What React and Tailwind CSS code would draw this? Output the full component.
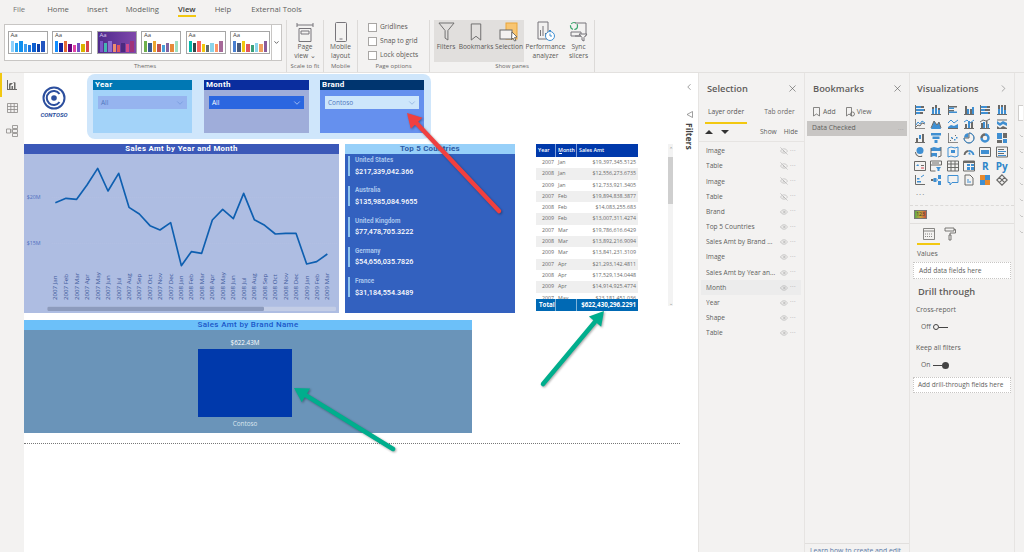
import React from "react";
import { X, ChevronDown, ChevronRight, ChevronLeft, Eye, EyeOff } from "lucide-react";

const tabs = [
  ["Home", "ml-[22px]"], ["Insert", "ml-[18px]"], ["Modeling", "ml-[18px]"], ["View", "ml-[19px]"], ["Help", "ml-[19px]"], ["External Tools", "ml-[20px]"],
];

const themes = [
  { bars: ["#8ed1fc", "#2aa4f4", "#0f8fee", "#3f9ff0", "#1a75e0", "#0d5fd0", "#0c3fa8", "#2255c0"], cls: "bg-white", t: "text-[#444]" },
  { bars: ["#118dff", "#12239e", "#e66c37", "#6b007b", "#e044a7", "#744ec2", "#d9b300", "#d64550"], cls: "bg-white", t: "text-[#444]" },
  { bars: ["#7a55c7", "#45b6b0", "#8e6fd1", "#ee8e6d", "#e0555f", "#4b2a7f", "#d14a8b", "#a0337a"], cls: "bg-gradient-to-r from-[#4f2a8c] to-[#8048ab]", t: "text-[#d9c9ee]" },
  { bars: ["#6fb04b", "#3b5b92", "#eda62f", "#c0504d", "#4aa0d9", "#8064a2", "#e68a3a", "#9fdfc0"], cls: "bg-white", t: "text-[#444]" },
  { bars: ["#01b8aa", "#374649", "#fd625e", "#f2c80f", "#5f6b6d", "#8ad4eb", "#fe9666", "#a66999"], cls: "bg-white", t: "text-[#444]" },
  { bars: ["#4a7fd0", "#4a5a7a", "#f2c80f", "#e0555f", "#3aa07a", "#8ad4eb", "#f2a060", "#8a5a9a"], cls: "bg-white", t: "text-[#444]" },
];
const barHeights = [11, 9, 11, 8, 7, 9, 8, 11];

const layers = [
  ["Image", 0], ["Table", 0], ["Image", 0], ["Table", 0], ["Brand", 1], ["Top 5 Countries", 1], ["Sales Amt by Brand ...", 1], ["Image", 1],
  ["Sales Amt by Year an...", 1], ["Month", 1], ["Year", 1], ["Shape", 1], ["Table", 1],
];

const countries = [
  ["United States", "$217,339,042.366"], ["Australia", "$135,985,084.9655"], ["United Kingdom", "$77,478,705.3222"],
  ["Germany", "$54,656,035.7826"], ["France", "$31,184,554.3489"],
];

const rows = [
  ["2007", "Jan", "$19,397,345.5125"], ["2008", "Jan", "$12,556,273.6735"], ["2009", "Jan", "$12,733,921.3405"],
  ["2007", "Feb", "$19,894,838.3877"], ["2008", "Feb", "$14,083,255.683"], ["2009", "Feb", "$13,007,311.4274"],
  ["2007", "Mar", "$19,786,616.6429"], ["2008", "Mar", "$13,892,216.9094"], ["2009", "Mar", "$13,841,231.3109"],
  ["2007", "Apr", "$21,293,142.4811"], ["2008", "Apr", "$17,529,134.0448"], ["2009", "Apr", "$14,914,925.4774"],
  ["2007", "May", "$23,181,451.036"],
];

const pts = [[106,188],[138,175],[170,178],[201,135],[233,85],[264,153],[296,100],[327,202],[358,222],[390,257],[420,270],[452,248],[484,377],[514,335],[545,340],[577,240],[608,208],[640,236],[671,160],[703,239],[734,256],[766,282],[797,280],[828,280],[860,372],[890,365],[922,342]];
const months = ["Jan","Feb","Mar","Apr","May","Jun","Jul","Aug","Sep","Oct","Nov","Dec"];
const xLabels = pts.map((_, i) => `${2007 + Math.floor(i / 12)} ${months[i % 12]}`);

// each icon: g = grey fill, b = blue fill, gs = grey stroke, bs = blue stroke
const vizIcons = [
  { g: "M1 1h1v10H1z M7 2h3v2H7z M10 5h1v2h-1z M6 8h3v2H6z", b: "M2 2h5v2H2z M2 5h8v2H2z M2 8h4v2H2z" },
  { g: "M1 10h10v1H1z M2 3h2v2H2z M5 1h2v3H5z M8 4h2v2H8z", b: "M2 5h2v5H2z M5 4h2v6H5z M8 6h2v4H8z" },
  { g: "M1 1h1v10H1z M2 2h8v1.5H2z M2 6h5v1.5H2z", b: "M2 3.5h5V5H2z M2 7.5h8V9H2z" },
  { g: "M1 10h10v1H1z M2 2h2v8H2z M7 5h2v5H7z", b: "M4 5h2v5H4z M9 3h2v7H9z" },
  { g: "M1 1h1v10H1z M8 2h3v2H8z M6 5h5v2H6z M9 8h2v2H9z", b: "M2 2h6v2H2z M2 5h4v2H2z M2 8h7v2H2z" },
  { g: "M2 1h2v4H2z M5 1h2v2H5z M8 1h2v5H8z M1 10h10v1H1z", b: "M2 5h2v5H2z M5 3h2v7H5z M8 6h2v4H8z" },
  { g: "M1 1h.8v9.2H11v.8H1z", bs: "M2 7l2-3 2 2 2-3 3 2", gs: "M2 9l2-2 2 1 2-3 3 1" },
  { b: "M1 11L4 3l3 4 2-3 2 7z", gs: "M1 10L4 3l3 4 2-3 2 6" },
  { b: "M1 9l3-2 3 1 4-2v5H1z", bs: "M1 5l3-3 3 3 4-3", gs: "M1 10.5h10" },
  { g: "M2 6h2v4H2z M8 4h2v6H8z M1 10h10v1H1z", b: "M5 3h2v7H5z", bs: "M1 4l3-2 3 3 4-3" },
  { g: "M2 5h2v5H2z M7 3h1.5v7H7z M1 10h10v1H1z", b: "M4 4h2v6H4z M8.500 6H10v4H8.500z", gs: "M1 4l3-2 3 1 4-2" },
  { b: "M1 3l3 2 3-2 4 2v3l-4-2-3 2-3-2z", g: "M1 8l3 2 3-2 4 2v1H1z", gs: "M1 2h10" },
  { g: "M1 10h10v1H1z M2 6h2v4H2z M8 2h2v8H8z", b: "M5 3h2v4H5z" },
  { b: "M1 1h10v2.500H1z M2.500 4.500h7V7h-7z M4.500 8h3v3h-3z" },
  { g: "M1 1h.8v9.2H11v.8H1z M3 8h1v1H3z M5 6h1v1H5z M8 3h1v1H8z", b: "M4 5h1.500v1.500H4z M7 7h1.500v1.500H7z M9 5h1.500v1.500H9z" },
  { gs: "M6 6V1a5 5 0 1 1-5 5z", b: "M5.500 1a5 5 0 0 0-4.500 4.500h4.500z", bs: "M6 1a5 5 0 1 1-5 5" },
  { bs: "M6 2.500a3.500 3.500 0 1 1-3.500 3.500", gs: "M2.500 6A3.500 3.500 0 0 1 6 2.500" , sw: 2.4 },
  { b: "M1 1h5v6H1z M7 7h4v4H7z", g: "M7 1h4v5H7z M1 8h5v3H1z" },
  { g: "M5 10h3v1H4z M2 6a4 4 0 0 0 6 3.500l.5.8A5 5 0 0 1 1 6z", b: "M6 1a3.500 3.500 0 1 0 0 7 3.500 3.500 0 0 0 0-7z" },
  { b: "M1 2l3-1 4 1 3-1v4H1z M1 7h6v4L4 10l-3 1z", gs: "M1 2v9 M11 1v9l-3 1" },
  { bs: "M1 2l3-1 4 1 3-1v9l-3 1-4-1-3 1z", b: "M4 4h4v3H4z" },
  { gs: "M1.500 9a4.500 4.500 0 0 1 4-4", bs: "M5.500 5a4.500 4.500 0 0 1 5 4", b: "M5 8l2-2 .5 3z", sw: 1.8 },
  { gs: "M.5 1.500h11v9H.5z", b: "M2 4h8v4H2z" },
  { gs: "M.5 1h11v10H.5z", g: "M2 3h6v1H2z M2 7h6v1H2z", b: "M2 5h8v1H2z M2 9h8v1H2z" },
  { gs: "M.5 1.500h11v9H.5z", b: "M2 6l2-2 1 2z", g: "M7 5h3v1H7z", rs: "M7 8h3" },
  { gs: "M.5 1h11v4H.5z M.5 5v6h5 M2 3h7", b: "M6 7h5L9.500 9v2h-2V9z" },
  { gs: "M.5 1h11v10H.5z M.5 4h11 M.5 7.500h11 M4 1v10 M8 1v10" },
  { gs: "M.5 1h11v10H.5z", g: "M1 1h10v2H1z", b: "M4 4h3v2H4z M8 4h3v2H8z M4 7h3v3H4z M8 7h3v3H8z" },
  { text: "R" },
  { text: "Py" },
  { gs: "M1.500 1v9.500H11", b: "M3 7h4v1.500H3z M3 4h2.500v1.500H3z", bs: "M7 3l3-2" },
  { b: "M3.500 4h3v4h-3z M8 1h3v4H8z M8 7h3v4H8z", g: "M1 5h2.500v2H1z", bs: "M6.500 6H8" },
  { bs: "M1 1.500h10v7H5L3 11V8.500H1z" },
  { gs: "M2 1h5l3 3v7H2z", bs: "M4 8h4 M4 6h2" },
  { o: "M1 1h5v5H1z M6 6h5v5H6z", b: "M6 1h5v5H6z M1 6h5v5H1z" },
  { gs: "M6 .8L11.200 6 6 11.200 .8 6z M3.400 3.400L8.600 8.600 M8.600 3.400L3.400 8.600", sw: 1.2 },
];

function VizIcon({ i }) {
  if (i.text)
    return <div className="w-[13px] h-[12px] flex items-center justify-center font-bold text-[10px] leading-none text-[#2f86c9]">{i.text}</div>;
  return (
    <svg viewBox="0 0 12 12" className="w-[12px] h-[12px] block mx-auto">
      {i.g && <path d={i.g} fill="#6b6a68" />}
      {i.b && <path d={i.b} fill="#3f8fd2" />}
      {i.o && <path d={i.o} fill="#e88a2c" />}
      {i.gs && <path d={i.gs} fill="none" stroke="#6b6a68" strokeWidth={i.sw || 1} />}
      {i.bs && <path d={i.bs} fill="none" stroke="#3f8fd2" strokeWidth={i.sw || 1} />}
      {i.rs && <path d={i.rs} fill="none" stroke="#d64550" strokeWidth="1" />}
    </svg>
  );
}

function Group({ w, label, children }) {
  return (
    <div className={`${w} h-full flex flex-col border-r border-[#dcdad8]`}>
      <div className="flex-1 flex min-h-0">{children}</div>
      <div className="h-[9px] mb-[1px] text-[6px] leading-[9px] text-center text-[#6b6967]">{label}</div>
    </div>
  );
}

function Btn({ w, icon, l1, l2 }) {
  return (
    <div className={`${w} flex flex-col items-center`}>
      <div className="h-[21px] mt-[1px] flex items-center justify-center">{icon}</div>
      <div className="text-[6.600px] leading-[9px] text-[#5a5856] whitespace-nowrap">{l1}</div>
      <div className="text-[6.600px] leading-[9px] text-[#5a5856] whitespace-nowrap">{l2}</div>
    </div>
  );
}

function Check({ label }) {
  return (
    <div className="flex items-center h-[14px]">
      <div className="w-[9px] h-[9px] bg-white border border-[#a8a6a4]" />
      <div className="ml-[3px] text-[6.700px] text-[#5a5856] whitespace-nowrap">{label}</div>
    </div>
  );
}

function Slicer({ w, title, value, head, body, ddCls, txt, chev, ml }) {
  return (
    <div className={`${w} ${ml} h-[53px] flex flex-col ${body}`}>
      <div className={`h-[10px] ${head} text-white text-[8px] leading-[10px] font-bold pl-[2px] font-['Roboto'] tracking-[0.3px]`}>{title}</div>
      <div className={`mx-[5px] mt-[6px] h-[13px] ${ddCls} flex items-center justify-between pl-[3px] pr-[2px]`}>
        <span className={`text-[6.500px] ${txt}`}>{value}</span>
        <ChevronDown size={10} color={chev} strokeWidth={1.5} />
      </div>
    </div>
  );
}

function Arrow({ tip, tail, color, w = 4.5, head = 14, hw = 8 }) {
  const dx = tail[0] - tip[0], dy = tail[1] - tip[1];
  const len = Math.hypot(dx, dy), ux = dx / len, uy = dy / len;
  const bx = tip[0] + ux * head, by = tip[1] + uy * head;
  const p = `${tip[0]},${tip[1]} ${bx - uy * hw},${by + ux * hw} ${bx + uy * hw},${by - ux * hw}`;
  return (
    <g>
      <line x1={bx} y1={by} x2={tail[0]} y2={tail[1]} stroke={color} strokeWidth={w} strokeLinecap="round" />
      <polygon points={p} fill={color} />
    </g>
  );
}

export default function App() {
  const line = pts.map((p) => p.join(",")).join(" ");
  return (
    <div className="relative w-[1024px] h-[552px] overflow-hidden flex flex-col bg-[#f3f2f1] font-['Open_Sans','Noto_Sans',sans-serif] text-[#605e5c]">
      {/* Ribbon */}
      <div className="h-[73px] shrink-0 flex flex-col border-b border-[#e3e1df]">
        <div className="h-[20px] flex items-start pt-[3px] text-[7.700px] leading-[12px] shrink-0">
          <span className="ml-[13px] text-[#777]">File</span>
          {tabs.map(([t, m]) => (
            <span key={t} className={`${m} ${t === "View" ? "relative font-semibold text-[#3b3a39]" : ""}`}>
              {t}
              {t === "View" && <span className="absolute left-0 right-0 top-[12px] h-[2px] bg-[#f2c811]" />}
            </span>
          ))}
        </div>
        <div className="flex-1 flex pl-[4px] min-h-0">
          <Group w="w-[283px]" label="Themes">
            <div className="w-[278px] h-[37px] mt-[4px] bg-white border border-[#c8c6c4] flex">
              <div className="flex-1 flex gap-[4.500px] pl-[2.500px] pt-[6px]">
                {themes.map((t, i) => (
                  <div key={i} className={`w-[40px] h-[23px] border border-[#a6a6a6] ${t.cls} flex flex-col px-[2px] pb-[1px]`}>
                    <div className={`text-[6px] leading-[7px] ${t.t}`}>Aa</div>
                    <div className="flex-1 flex items-end gap-[1px]">
                      {t.bars.map((c, j) => (
                        <div key={j} className="flex-1" style={{ background: c, height: barHeights[j] }} />
                      ))}
                    </div>
                  </div>
                ))}
              </div>
              <div className="w-[10px] border-l border-[#c8c6c4] flex items-center justify-center">
                <ChevronDown size={7} strokeWidth={3} color="#555" />
              </div>
            </div>
          </Group>
          <Group w="w-[37px]" label="Scale to fit">
            <Btn w="w-full" l1="Page" l2="view ⌄" icon={
              <svg width="18" height="20" viewBox="0 0 18 20" fill="none" stroke="#77757a" strokeWidth="1"><path d="M1 1v4M17 1v4M1 3h16M3 6.500h12v13H3zM5 9h8v3H5z" /></svg>
            } />
          </Group>
          <Group w="w-[34px]" label="Mobile">
            <Btn w="w-full" l1="Mobile" l2="layout" icon={
              <svg width="12" height="20" viewBox="0 0 12 20" fill="none" stroke="#77757a" strokeWidth="1"><rect x=".5" y=".5" width="11" height="19" rx="1" /><path d="M4.500 17h3" /></svg>
            } />
          </Group>
          <Group w="w-[72px]" label="Page options">
            <div className="flex flex-col pl-[10px]">
              <Check label="Gridlines" /><Check label="Snap to grid" /><Check label="Lock objects" />
            </div>
          </Group>
          <Group w="w-[165px]" label="Show panes">
            <div className="ml-[4px] w-[90px] h-[42px] bg-[#e1dfdd] flex">
              <Btn w="w-[24px]" l1="Filters" icon={
                <svg width="17" height="19" viewBox="0 0 18 20" fill="none" stroke="#6b6a6a" strokeWidth="1"><path d="M1 1h16l-6.500 8v10l-3-2V9z" /></svg>
              } />
              <Btn w="w-[36px]" l1="Bookmarks" icon={
                <svg width="12" height="18" viewBox="0 0 12 19" fill="none" stroke="#6b6a6a" strokeWidth="1"><path d="M1 1h10v17l-5-4-5 4z" /></svg>
              } />
              <Btn w="w-[30px]" l1="Selection" icon={
                <svg width="20" height="20" viewBox="0 0 20 20"><rect x="7" y="1" width="11" height="16" fill="#f8c571" stroke="#e9a53a" /><rect x="1" y="8" width="12" height="9" fill="#f3f2f1" stroke="#6b6a6a" /><path d="M13 10l5 5-2.500.5 1.500 3-1.500.5-1.500-3-1.500 1.500z" fill="#fff" stroke="#555" strokeWidth=".8" /></svg>
              } />
            </div>
            <Btn w="w-[43px]" l1="Performance" l2="analyzer" icon={
              <svg width="18" height="21" viewBox="0 0 18 21" fill="none"><path d="M1 1h10v17H1z" stroke="#77757a" /><path d="M3.500 15V9M6 15V5M8.500 15v-3" stroke="#77757a" /><circle cx="13" cy="15" r="4.500" fill="#fff" stroke="#3f8fd2" /><path d="M13 12.500V15h2M12 9.500h2" stroke="#3f8fd2" /></svg>
            } />
            <Btn w="w-[23px]" l1="Sync" l2="slicers" icon={
              <svg width="19" height="21" viewBox="0 0 19 21" fill="none"><circle cx="5" cy="5" r="3.500" stroke="#3aa76d" strokeWidth="1.200" strokeDasharray="5 1.500" /><path d="M6 2h11v13H6M2 11h10v4H2z" stroke="#77757a" /><path d="M10 13h8l-3 3.500V20l-2-1v-2.500z" fill="#f3f2f1" stroke="#77757a" /></svg>
            } />
          </Group>
        </div>
      </div>

      {/* Body */}
      <div className="flex-1 flex min-h-0">
        {/* Left rail */}
        <div className="w-[24px] shrink-0 flex flex-col">
          <div className="h-[24px] border-l-2 border-[#f2c811] flex items-center justify-center pr-[2px]">
            <svg width="10" height="10" viewBox="0 0 10 10" fill="#6b6a68"><path d="M0 0h1v9h9v1H0zM2 4h1.500v5H2zM4.500 6H6v3H4.500zM7 3h1.500v6H7z M2 3l2 2 3-3 2 1" /></svg>
          </div>
          <div className="h-[22px] flex items-center justify-center">
            <svg width="11" height="10" viewBox="0 0 11 10" fill="none" stroke="#8a8886" strokeWidth=".8"><path d="M.5.5h10v9H.5zM.5 3.500h10M.5 6.500h10M3.800.5v9M7.200.5v9" /></svg>
          </div>
          <div className="h-[24px] flex items-center justify-center">
            <svg width="12" height="12" viewBox="0 0 12 12" fill="none" stroke="#8a8886" strokeWidth=".8"><path d="M.5 4h4v4h-4zM6.500.5h5v3h-5zM6.500 4.500h5v3h-5zM6.500 8.500h5v3h-5zM4.500 5h2M4.500 7h2" /></svg>
          </div>
        </div>

        {/* Canvas */}
        <div className="w-[656px] shrink-0 bg-white pt-[1px] flex flex-col">
          <div className="h-[65px] flex items-start shrink-0">
            <div className="ml-[18px] mt-[12px] w-[24px] flex flex-col items-center">
              <svg width="24" height="24" viewBox="0 0 24 24" fill="none" stroke="#2c4f9e">
                <circle cx="12" cy="12" r="10.500" strokeWidth="2" />
                <path d="M17.500 8a7 7 0 1 0 0 8" strokeWidth="2" />
                <circle cx="12" cy="12" r="2.800" fill="#2c4f9e" stroke="none" />
              </svg>
              <div className="text-[6px] leading-[8px] font-bold italic text-[#2c4f9e] font-['Roboto'] mt-[1px]">CONTOSO</div>
            </div>
            <div className="ml-[21px] w-[344px] h-[65px] rounded-[8px] bg-[#cfe6fb] pt-[6px] pl-[6px] flex">
              <Slicer w="w-[99px]" title="Year" value="All" head="bg-[#0078b4]" body="bg-[#a3d3f9]" ddCls="bg-[#96b4ef]" txt="text-[#4f78c0]" chev="#6d94d8" />
              <Slicer w="w-[105px]" ml="ml-[12px]" title="Month" value="All" head="bg-[#0a2d9e]" body="bg-[#9fadda]" ddCls="bg-[#2b66e0]" txt="text-white" chev="#dfe9fb" />
              <Slicer w="w-[104px]" ml="ml-[11px]" title="Brand" value="Contoso" head="bg-[#00356f]" body="bg-[#6590ee]" ddCls="bg-[#cde6fb]" txt="text-[#4f78c0]" chev="#7ea3d8" />
            </div>
          </div>

          <div className="mt-[5px] h-[169px] flex items-start shrink-0">
            {/* Line chart */}
            <div className="w-[315px] h-[169px] bg-[#aebde2] flex flex-col">
              <div className="h-[10px] bg-[#3b58b8] text-white text-center text-[7.800px] leading-[10px] font-bold font-['Roboto'] tracking-[0.35px]">Sales Amt by Year and Month</div>
              <svg viewBox="12 42 945 477" className="w-[315px] h-[159px] block">
                <g fontSize="16" fill="#4f70c0" fontFamily="Open Sans, sans-serif">
                  <text x="20" y="178">$20M</text>
                  <text x="20" y="316">$15M</text>
                </g>
                <path d="M95 172H950M95 310H950" stroke="#b8c5e6" strokeWidth="1.500" strokeDasharray="3 3" />
                <polyline points={line} fill="none" stroke="#0e5fb0" strokeWidth="5" strokeLinejoin="round" />
                <g fontSize="18.500" fill="#3e5a9c" fontFamily="Open Sans, sans-serif">
                  {pts.map((p, i) => (
                    <text key={i} transform={`translate(${p[0] + 6} 480) rotate(-90)`}>{xLabels[i]}</text>
                  ))}
                </g>
                <rect x="82" y="500" width="866" height="13" rx="4" fill="#c3cde6" />
                <rect x="82" y="500" width="650" height="13" rx="4" fill="#8d9bbd" />
              </svg>
            </div>

            {/* Top countries */}
            <div className="ml-[6px] w-[170px] h-[169px] bg-[#3361bf] flex flex-col">
              <div className="h-[10px] bg-[#97d0f9] text-[#2d5ca6] text-center text-[8px] leading-[10px] font-bold font-['Roboto'] tracking-[0.2px]">Top 5 Countries</div>
              <div className="flex flex-col pl-[3px] pt-[2px] gap-[10.300px]">
                {countries.map(([n, v]) => (
                  <div key={n} className="h-[20px] border-l-[2px] border-[#8fc4ee] pl-[5px] flex flex-col">
                    <div className="text-[6.300px] leading-[8px] font-bold text-[#a9c6ee] font-['Roboto']">{n}</div>
                    <div className="text-[7.200px] leading-[12px] mt-[1.500px] font-medium text-white font-['Roboto']">{v}</div>
                  </div>
                ))}
              </div>
            </div>

            {/* Table */}
            <div className="ml-[21px] w-[102px] h-[167px] flex flex-col">
              <div className="h-[13px] bg-[#0039ab] grid grid-cols-[20px_21px_61px] text-white text-[5.300px] leading-[12px] font-semibold shrink-0">
                <div className="pl-[2px] border-r border-[#7f9fdc]">Year</div>
                <div className="pl-[2px] border-r border-[#7f9fdc] relative">Month<span className="absolute left-[3px] top-[9px] w-[3px] h-[1px] bg-white" /></div>
                <div className="pl-[2px]">Sales Amt</div>
              </div>
              <div className="h-[142px] overflow-hidden shrink-0">
                {rows.map((r, i) => (
                  <div key={i} className={`h-[11.300px] grid grid-cols-[20px_21px_61px] text-[5.300px] leading-[11.300px] text-[#6a6a6a] ${i % 2 ? "bg-[#efefef]" : "bg-white"}`}>
                    <div className="text-right pr-[2px]">{r[0]}</div>
                    <div className="pl-[2px]">{r[1]}</div>
                    <div className="text-right pr-[2px]">{r[2]}</div>
                  </div>
                ))}
              </div>
              <div className="h-[12px] bg-[#0069b4] grid grid-cols-[20px_21px_61px] text-white text-[6.200px] leading-[12px] font-bold shrink-0">
                <div className="pl-[3px] border-r border-[#7fb4da]">Total</div>
                <div className="border-r border-[#7fb4da]" />
                <div className="text-right pr-[2px] whitespace-nowrap">$622,430,296.2291</div>
              </div>
            </div>

            {/* Scroll bar */}
            <div className="ml-[30px] w-[5px] h-[162px] bg-[#f3f3f3] flex flex-col items-center">
              <div className="h-[13px] text-[5px] leading-[10px] text-[#888]">⌃</div>
              <div className="w-full h-[47px] bg-[#cfcfcf]" />
              <div className="mt-auto text-[5px] leading-[6px] text-[#888]">⌄</div>
            </div>
          </div>

          {/* Brand chart */}
          <div className="mt-[7px] w-[448px] h-[113px] bg-[#6a94b9] flex flex-col items-center shrink-0">
            <div className="w-full h-[10px] bg-[#6cc0f9] text-[#1b57c8] text-center text-[8px] leading-[10px] font-medium font-['Roboto'] tracking-[0.35px]">Sales Amt by Brand Name</div>
            <div className="mt-[8px] mr-[6px] text-[6.300px] leading-[9px] text-white">$622.43M</div>
            <div className="mt-[2px] mr-[6px] w-[94px] h-[68px] bg-[#0039ab]" />
            <div className="mt-[2px] mr-[6px] text-[6.300px] leading-[9px] text-[#dce6f0]">Contoso</div>
          </div>

          <div className="mt-[10px] border-t border-dotted border-[#777]" />
        </div>

        {/* Filters pane */}
        <div className="w-[19px] shrink-0 bg-white border-r border-[#e6e4e2] flex flex-col items-center">
          <ChevronLeft size={10} strokeWidth={1.5} color="#666" className="mt-[9px]" />
          <svg width="7" height="7" viewBox="0 0 7 7" fill="none" stroke="#777" strokeWidth=".7" className="mt-[19px]"><path d="M6.500.5L1 3.500l5.500 3z" /></svg>
          <div className="mt-[5px] text-[8.500px] font-bold text-[#444] [writing-mode:vertical-rl] leading-[10px]">Filters</div>
        </div>

        {/* Selection */}
        <div className="w-[106px] shrink-0 border-r border-[#e6e4e2] flex flex-col">
          <div className="h-[30px] flex items-center justify-between pl-[8px] pr-[6px] pt-[1px] shrink-0">
            <span className="text-[9.300px] font-semibold text-[#5f5d5b]">Selection</span>
            <X size={11} strokeWidth={1.3} color="#555" />
          </div>
          <div className="h-[19px] flex items-center text-[6.700px] pl-[9px] text-[#555] relative shrink-0">
            <span>Layer order</span>
            <span className="ml-[20px] text-[#6b6967]">Tab order</span>
            <span className="absolute left-[6px] top-[19px] w-[42px] h-[2px] bg-[#f2c811]" />
          </div>
          <div className="h-[20px] flex items-center text-[6.600px] pl-[6px] pr-[6px] border-b border-[#e6e4e2] shrink-0">
            <svg width="8" height="4" viewBox="0 0 8 4" fill="#333"><path d="M4 0l4 4H0z" /></svg>
            <svg width="8" height="4" viewBox="0 0 8 4" fill="#333" className="ml-[8px]"><path d="M4 4L0 0h8z" /></svg>
            <span className="ml-auto">Show</span>
            <span className="ml-[7px]">Hide</span>
          </div>
          <div className="flex flex-col pt-[1.500px] pl-[2px] pr-[3px]">
            {layers.map(([n, vis], i) => (
              <div key={i} className={`h-[15.200px] flex items-center pl-[5px] pr-[2px] text-[6.600px] ${n === "Month" ? "bg-[#ececec]" : ""}`}>
                <span className="flex-1 whitespace-nowrap overflow-hidden">{n}</span>
                {vis ? <Eye size={8} strokeWidth={1.3} color="#999" /> : <EyeOff size={8} strokeWidth={1.3} color="#999" />}
                <span className="ml-[2px] w-[9px] text-[6px] leading-[7px] tracking-[0.4px] text-[#888] -translate-y-[1px]">···</span>
              </div>
            ))}
          </div>
        </div>

        {/* Bookmarks */}
        <div className="w-[105px] shrink-0 border-r border-[#e6e4e2] flex flex-col">
          <div className="h-[30px] flex items-center justify-between pl-[8px] pr-[6px] pt-[1px] shrink-0">
            <span className="text-[9.300px] font-semibold text-[#5f5d5b]">Bookmarks</span>
            <X size={11} strokeWidth={1.3} color="#555" />
          </div>
          <div className="h-[18px] flex items-center pl-[8px] text-[6.800px] shrink-0">
            <svg width="7" height="10" viewBox="0 0 7 10" fill="none" stroke="#6b6a68" strokeWidth=".8"><path d="M.5.5h6v8.500l-3-2-3 2z" /></svg>
            <span className="ml-[3px]">Add</span>
            <svg width="9" height="10" viewBox="0 0 9 10" fill="none" stroke="#6b6a68" strokeWidth=".8" className="ml-[10px]"><path d="M.5.5h5v8.500l-2.500-2-2.500 2z" /><circle cx="6.500" cy="7" r="2" /></svg>
            <span className="ml-[2px]">View</span>
          </div>
          <div className="mx-[2px] h-[15px] bg-[#c8c6c4] flex items-center justify-between pl-[5px] pr-[3px] text-[6.800px] shrink-0">
            <span>Data Checked</span><span className="text-[#888] text-[6px] tracking-[0.4px] leading-[6px]">···</span>
          </div>
          <div className="mt-auto h-[9px] border-t border-[#e1dfdd] pl-[5px] text-[6.800px] leading-[14px] text-[#5a7aa8] overflow-hidden whitespace-nowrap shrink-0">Learn how to create and edit</div>
        </div>

        {/* Visualizations */}
        <div className="w-[105px] shrink-0 border-r border-[#e6e4e2] flex flex-col">
          <div className="h-[30px] flex items-center justify-between pl-[7px] pr-[5px] pt-[1px] shrink-0">
            <span className="text-[9.300px] font-semibold text-[#5f5d5b]">Visualizations</span>
            <ChevronRight size={11} strokeWidth={1.2} color="#666" />
          </div>
          <div className="grid grid-cols-[repeat(6,16.300px)] auto-rows-[14px] pl-[2px] shrink-0">
            {vizIcons.map((i, k) => (
              <div key={k} className="flex items-center justify-center"><VizIcon i={i} /></div>
            ))}
          </div>
          <div className="h-[20px] pl-[6px] text-[8px] leading-[15px] tracking-[1px] text-[#666] border-b border-dashed border-[#dcdad8] mt-[-1px] shrink-0">···</div>
          <div className="h-[18px] border-b border-[#e1dfdd] flex items-center pl-[4px] shrink-0">
            <div className="w-[13px] h-[9px] bg-gradient-to-r from-[#57a845] via-[#c9a53a] to-[#c8503f] border border-[#777] text-[5px] leading-[7px] text-center text-[#333]">123</div>
          </div>
          <div className="flex h-[21px] pl-[7px] shrink-0">
            <div className="w-[23px] h-[21px] border-b-2 border-[#f2c811] flex justify-center pt-[4px]">
              <svg width="12" height="12" viewBox="0 0 12 12" fill="none" stroke="#6b6a68" strokeWidth=".8"><path d="M.5.5h11v11H.5zM.5 3h11" /><path d="M2 6h8M2 8.500h8" strokeDasharray="1 1" /></svg>
            </div>
            <div className="ml-[4px] flex pt-[3px]">
              <svg width="12" height="14" viewBox="0 0 12 14" fill="none" stroke="#6b6a68" strokeWidth=".9"><path d="M1 1h9v3H1zM10 2.500h1.500V6H6v2M5 8h2v5H5z" /></svg>
            </div>
          </div>
          <div className="text-[6.800px] pl-[7px] mt-[4px] leading-[10px] shrink-0">Values</div>
          <div className="mx-[3px] mt-[3px] h-[17px] bg-white border border-dotted border-[#c8c6c4] pl-[5px] text-[6.700px] leading-[15px] shrink-0">Add data fields here</div>
          <div className="pl-[8px] mt-[7px] text-[9.300px] leading-[12px] font-semibold text-[#5f5d5b] shrink-0">Drill through</div>
          <div className="pl-[6px] mt-[7px] text-[6.800px] leading-[10px] shrink-0">Cross-report</div>
          <div className="pl-[11px] mt-[7px] h-[10px] flex items-center text-[6.800px] shrink-0">
            <span>Off</span>
            <span className="ml-[2px] w-[6px] h-[6px] rounded-full border border-[#444]" />
            <span className="w-[9px] h-[1px] bg-[#444]" />
          </div>
          <div className="pl-[6px] mt-[11px] text-[6.800px] leading-[10px] shrink-0">Keep all filters</div>
          <div className="pl-[11px] mt-[7px] h-[10px] flex items-center text-[6.800px] shrink-0">
            <span>On</span>
            <span className="ml-[3px] w-[9px] h-[1px] bg-[#444]" />
            <span className="w-[7px] h-[7px] rounded-full bg-[#444]" />
          </div>
          <div className="mx-[3px] mt-[7px] h-[16px] bg-white border border-dotted border-[#c8c6c4] pl-[4px] text-[6.500px] leading-[14px] whitespace-nowrap shrink-0">Add drill-through fields here</div>
        </div>

        {/* Fields sliver */}
        <div className="w-[8px] shrink-0 flex flex-col pl-[3px] overflow-hidden">
          <div className="mt-[32px] w-[12px] h-[16px] bg-white border border-[#d0cecc]" />
          <div className="mt-[11px] flex flex-col gap-[8px]">
            {[0, 1, 2, 3, 4, 5, 6].map((i) => (
              <ChevronDown key={i} size={8} strokeWidth={1} color="#777" />
            ))}
          </div>
        </div>
      </div>

      {/* Annotation arrows */}
      <svg className="absolute inset-0 w-[1024px] h-[552px] pointer-events-none drop-shadow-[1px_1px_1px_rgba(0,0,0,0.35)]" viewBox="0 0 1024 552">
        <Arrow tip={[407, 113]} tail={[499, 211]} color="#f0403f" />
        <Arrow tip={[604, 311]} tail={[543, 384]} color="#00ae8d" />
        <Arrow tip={[294, 388]} tail={[393, 449]} color="#00ae8d" />
      </svg>
    </div>
  );
}
